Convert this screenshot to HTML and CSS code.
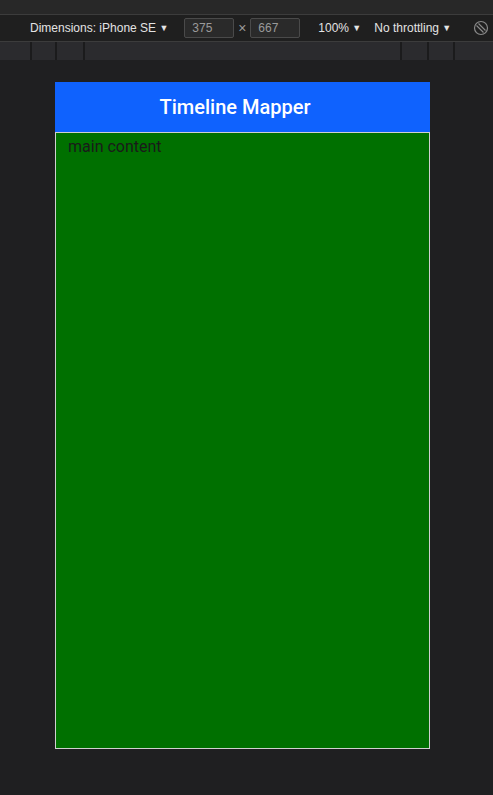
FILE: index.html
```html
<!DOCTYPE html>
<html>
<head>
<meta charset="utf-8">
<link rel="stylesheet" href="styles.css">
</head>
<body>
<div class="topstrip"></div>
<div class="toolbar">
  <span class="dim">Dimensions: iPhone SE <span class="caret">▼</span></span>
  <span class="box">375</span>
  <span class="times">×</span>
  <span class="box">667</span>
  <span class="zoom">100% <span class="caret">▼</span></span>
  <span class="throttle">No throttling <span class="caret">▼</span></span>
  <svg class="rotate" width="16" height="16" viewBox="0 0 16 16"><circle cx="8" cy="8" r="6.5" fill="none" stroke="#8a8a8a" stroke-width="1.2"/><path d="M3.5 5.5 L10.5 12.5 M5.5 3.5 L12.5 10.5" stroke="#8a8a8a" stroke-width="1.2" fill="none"/></svg>
</div>
<div class="ruler">
  <div class="seg s1"></div><div class="seg s2"></div><div class="seg s3"></div>
  <div class="seg grow"></div>
  <div class="seg s4"></div><div class="seg s5"></div><div class="seg s6"></div>
</div>
<div class="stage">
  <div class="device">
    <header class="appbar">Timeline Mapper</header>
    <main class="main">main content</main>
  </div>
</div>
</body>
</html>
```
FILE: styles.css
```css
html, body { margin: 0; padding: 0; }
body {
  width: 493px; height: 795px; overflow: hidden;
  background: #1f1f21;
  font-family: "Liberation Sans", Arial, sans-serif;
}
.topstrip { height: 14px; background: #282828; border-bottom: 1px solid #3c3c3c; }
.toolbar {
  height: 26px; background: #1f1f1f; border-bottom: 1px solid #3c3c3c;
  display: flex; align-items: center; color: #e3e3e3; font-size: 12px;
  padding-left: 30px; white-space: nowrap;
}
.caret { font-size: 9px; position: relative; top: -1px; }
.dim { margin-right: 16px; }
.box {
  box-sizing: border-box; width: 50px; height: 20px; border: 1px solid #4a4a4a;
  background: #2a2a2a; color: #9a9a9a; padding-left: 7px; line-height: 18px; border-radius: 2px;
}
.times { color: #9a9a9a; font-size: 14px; width: 16px; text-align: center; }
.zoom { margin-left: 18px; margin-right: 13px; }
.throttle { margin-right: 22px; }
.rotate { flex: none; }
.ruler { height: 18px; display: flex; background: #1b1b1c; gap: 2px; }
.seg { background: #2b2b2e; }
.s1 { width: 30px; } .s2 { width: 23px; } .s3 { width: 26px; }
.grow { flex: 1; }
.s4 { width: 25px; } .s5 { width: 24px; } .s6 { width: 38px; }
.stage { padding-top: 22px; padding-left: 55px; }
.device { width: 375px; }
.appbar {
  height: 50px; background: #0f62fe; color: #fff; font-size: 20px; font-weight: 500;
  font-family: Roboto, "Liberation Sans", sans-serif;
  display: flex; align-items: center; justify-content: center;
  padding-right: 15px; box-sizing: border-box;
}
.main {
  display: block; box-sizing: border-box; height: 617px; background: #007000;
  border: 1px solid #d0d0d0; padding: 4px 12px; font-size: 16px; color: #1a1a1a;
  font-family: Roboto, "Liberation Sans", sans-serif;
}
```
